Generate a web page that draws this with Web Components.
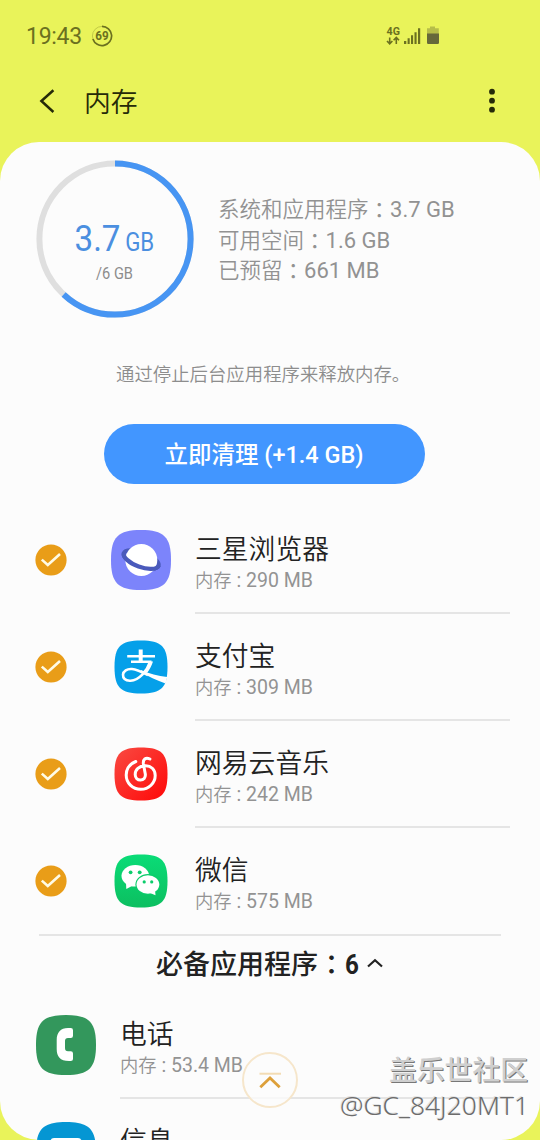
<!DOCTYPE html>
<html lang="zh-CN">
<head>
<meta charset="utf-8">
<title>内存</title>
<style>
html,body{margin:0;height:100%}
body{background:#e9f35a;font-family:Roboto,"Noto Sans CJK SC",sans-serif;color:#222;overflow:hidden}
</style>
</head>
<body>
<memory-page></memory-page>
<script>
const define = (name, html) => customElements.define(name, class extends HTMLElement {
  connectedCallback() {
    if (this.shadowRoot) return;
    const t = document.createElement('template');
    t.innerHTML = typeof html === 'function' ? html(this) : html;
    this.attachShadow({ mode: 'open' }).append(t.content.cloneNode(true));
  }
});

define('status-bar', `
<style>
:host{display:flex;height:72px;box-sizing:border-box;padding:0 100px 0 26px;justify-content:space-between;align-items:center;color:#6b7020}
.left{display:flex;align-items:center;gap:9px}
.time{font-size:23px;line-height:28px;width:56px;white-space:nowrap;letter-spacing:-.3px;padding-top:2px}
.right{display:flex;align-items:center}
svg{display:block}
</style>
<div class="left"><span class="time">19:43</span>
<svg width="22" height="22" viewBox="0 0 22 22"><circle cx="11" cy="11" r="9.6" fill="none" stroke="#c2ca45" stroke-width="1"/><path d="M11 1.4A9.6 9.6 0 1 1 1.9 14" fill="none" stroke="#6b7020" stroke-width="1.7"/><text x="11" y="15.2" font-size="12" font-weight="700" text-anchor="middle" textLength="13.4" lengthAdjust="spacingAndGlyphs" fill="#6b7020">69</text></svg></div>
<div class="right">
<svg width="54" height="22" viewBox="0 0 54 22"><text x=".6" y="10" font-size="11" font-weight="700" textLength="13.4" lengthAdjust="spacingAndGlyphs" fill="#6b7020">4G</text>
<g fill="none" stroke="#6b7020" stroke-width="1.6"><path d="M3.7 12.5V18.5M1 16l2.7 2.8L6.4 16M10.3 19v-6M7.6 15.3l2.7-2.8 2.7 2.8"/></g>
<g fill="#6b7020"><path d="M18 16h2.3v3H18zM21.6 13.3h2.1V19h-2.1zM25 10.3h2.1V19H25zM28.5 7.3h2.1V19h-2.1zM32 3.3h2.2V19H32z"/><path fill="#b6bd49" d="M44 1.5h5v1.8h3.8V9H41V3.3h3z"/><path fill="#66683a" d="M41 8.6h12V17.7q0 1.3-1.3 1.3h-9.4q-1.3 0-1.3-1.3z"/></g></svg></div>`);

define('title-bar', `
<style>
:host{display:flex;height:70px;box-sizing:border-box;padding:0 42px 12px 38px;align-items:center;color:#252a08}
.title{margin-left:28px;font-size:26.8px;line-height:36px;font-weight:350;padding-top:4px}
.more{margin-left:auto}
svg{display:block}
</style>
<svg width="18" height="26" viewBox="0 0 18 26"><path d="M15.4 2.2 3.4 13l12 11" fill="none" stroke="#252a08" stroke-width="2.5"/></svg>
<span class="title"><slot></slot></span>
<svg class="more" width="12" height="26" viewBox="0 0 12 26" fill="#252a08"><circle cx="6" cy="3.7" r="2.9"/><circle cx="6" cy="12.7" r="2.9"/><circle cx="6" cy="21.7" r="2.9"/></svg>`);

define('usage-ring', `
<style>:host{display:block;width:158px;height:158px}svg{display:block}</style>
<svg width="158" height="158" viewBox="0 0 158 158"><circle cx="79" cy="79" r="75.6" fill="none" stroke="#dfdfdf" stroke-width="6"/>
<circle cx="79" cy="79" r="75.6" fill="none" stroke="#4795f3" stroke-width="6" pathLength="100" stroke-dasharray="61.9 100" transform="rotate(-90 79 79)"/>
<text x="38.5" y="90.5" font-size="37.5" textLength="46" lengthAdjust="spacingAndGlyphs" fill="#4b8fe0">3.7</text>
<text x="89.2" y="90.5" font-size="25" textLength="29" lengthAdjust="spacingAndGlyphs" fill="#4b8fe0">GB</text>
<text x="60" y="119" font-size="16.4" textLength="37" lengthAdjust="spacingAndGlyphs" fill="#8c8c8c">/6 GB</text></svg>`);

define('usage-line', `
<style>:host{display:block;white-space:nowrap;font-size:22px;line-height:30.5px;height:30.5px;color:#929292}
.c{font-size:21.5px;font-weight:350}.k{font-size:21.5px;font-family:"Noto Sans CJK JP",sans-serif;display:inline-block;line-height:20px;transform:translateY(1px)}</style><span class="c"><slot></slot></span><span class="k" lang="ja">：</span><slot name="value"></slot>`);

define('pill-button', `
<style>:host{display:flex;width:321px;height:60px;border-radius:30px;background:#4296ff;color:#fff;align-items:center;justify-content:center;font-size:23.5px;font-weight:500}
span{line-height:32px;white-space:nowrap;padding-top:2px}</style><span><slot></slot></span>`);

define('check-mark', `
<style>:host{display:block;width:32px;height:32px}svg{display:block}</style>
<svg width="32" height="32" viewBox="0 0 32 32"><circle cx="16" cy="16" r="15.6" fill="#e99d18"/><path d="m6.8 15.6 6 5.4L25 10" fill="none" stroke="#fffbe6" stroke-width="2.6"/></svg>`);

const SQ = 'M0 30C0 7 7 0 30 0S60 7 60 30 53 60 30 60 0 53 0 30Z';
const SQ_S = 'M.5 27C.5 6.500 6.500 .5 27 .5S53.500 6.500 53.500 27 47.500 53.500 27 53.500 .5 47.500 .5 27Z';
const ICONS = {
  browser: [60, `<path d="${SQ}" fill="#7c84fb"/><g transform="rotate(20 30.2 29.5)" fill="none" stroke="#4a5abb" stroke-width="4.200"><ellipse cx="30.200" cy="29.500" rx="18.500" ry="7"/></g><circle cx="30.300" cy="30" r="16" fill="#fff"/><path d="M11.700 29C11.700 33.500 20 37 30.200 37S48.700 33.500 48.700 29" transform="rotate(20 30.2 29.5)" fill="none" stroke="#4a5abb" stroke-width="4.200"/>`],
  alipay: [54, `<path d="${SQ_S}" fill="#05a0e9"/><g fill="none" stroke="#fff" stroke-width="2.600"><path d="M13.200 16.200H41M17 21.800H37.500"/><path d="M26.700 9.500V22" stroke-width="4"/><path d="M36 21.800C33 31 25 40.300 16.500 40.700 11 41 8.800 38 9 34.700 9.300 31 13 28.600 18 29 23 29.500 28 32 34 35" /></g><path fill="#fff" d="M35.500 21.500H39C37.500 26 35.500 30 33 33L30.500 31.500C32.500 28.500 34.500 25 35.500 21.500Z"/><path fill="#fff" d="M27 30C35 33.500 44 36 53.200 37L51.500 43.500C43 40.500 34 36 26 32Z"/>`],
  netease: [54, `<defs><linearGradient id="g" x2="1" y2="1"><stop stop-color="#f94a42"/><stop offset="1" stop-color="#ff0808"/></linearGradient></defs><path d="${SQ_S}" fill="url(#g)"/><path d="M21.800 14.500C15.500 17 12.200 22 12.200 28 12.200 36 18.500 42.300 26.700 42.300S41.200 36 41.200 28.500C41.200 22.500 37 18.500 31 18.800 25 19 21.200 22.800 21.200 27.500 21.200 31 23.500 33 26.500 33S31.800 30.800 31.300 27L29.400 17C28.800 12.500 31.500 9.800 35.900 12" fill="none" stroke="#fff" stroke-width="3" stroke-linecap="round"/>`],
  wechat: [54, `<defs><linearGradient id="g" x2="0" y2="1"><stop stop-color="#0adc77"/><stop offset="1" stop-color="#0cbf60"/></linearGradient></defs><path d="${SQ_S}" fill="url(#g)"/><path fill="#fff" d="M12 28 12.300 35 19 31.500Z"/><ellipse cx="21.300" cy="21.800" rx="13.800" ry="10.800" fill="#fff"/><ellipse cx="33.900" cy="30.500" rx="12.500" ry="10.400" fill="#0bcd6b"/><ellipse cx="33.900" cy="30.500" rx="11.400" ry="9.300" fill="#fff"/><path fill="#fff" d="M36 39 41.500 41.200 41 36Z"/><g fill="#0bcd6b"><circle cx="16.600" cy="18.300" r="1.900"/><circle cx="25.700" cy="18.300" r="1.900"/><circle cx="30.200" cy="27.900" r="1.600"/><circle cx="37.700" cy="27.900" r="1.600"/></g>`],
  phone: [60, `<path d="${SQ}" fill="#33975c"/><path fill="#fff" d="M32 13H34.800Q37 13 37 15.200V20.800Q37 23 34.800 23H32Q29 23 29 26V33Q29 36.200 32 36.200H34.800Q37 36.200 37 38.400V44Q37 46 34.800 46H33C24 46 20.700 41.500 20.700 34V25C20.700 17.500 24.500 13 32 13Z"/>`],
  message: [60, `<path d="${SQ}" fill="#0596d3"/><rect x="14.500" y="16" width="31" height="26" rx="3.500" fill="#fff"/>`]
};
define('app-icon', el => {
  const [size, art] = ICONS[el.getAttribute('name')];
  return `<style>:host{display:flex;width:60px;height:60px;align-items:center;justify-content:center}</style>
<svg width="${size}" height="${size}" viewBox="0 0 ${size} ${size}">${art}</svg>`;
});

define('app-row', el => `
<style>
:host{display:flex;height:107px;box-sizing:border-box;padding:0 30px 0 35px;align-items:stretch}
check-mark{align-self:center;margin:-1px 44px 0 0}
app-icon{align-self:center;margin:-1px 24px 0 0}
:host([essential]) app-icon{margin-left:1px}
.text{flex:1;display:flex;flex-direction:column;border-bottom:2px solid #e5e5e5;white-space:nowrap;padding-top:26px}
:host([last]) .text{border-color:transparent}
.name{font-size:26.8px;line-height:34px;color:#222;font-weight:350}
.sub{font-size:19.5px;line-height:28px;color:#939393}
.sub i{font-style:normal;font-size:18.3px;font-weight:350}
</style>
${el.hasAttribute('essential') ? '' : '<check-mark></check-mark>'}<app-icon name="${el.getAttribute('icon')}"></app-icon>
<div class="text"><span class="name"><slot></slot></span>${el.hasAttribute('size') ? `<span class="sub"><i>内存</i> : ${el.getAttribute('size')}</span>` : ''}</div>`);

define('section-title', `
<style>:host{display:flex;height:58px;margin:-1px 39px 0;border-top:2px solid #e5e5e5;box-sizing:border-box;padding-bottom:3px;align-items:center;justify-content:center;font-size:27px;font-weight:500;color:#222;white-space:nowrap}
.k{font-family:"Noto Sans CJK JP",sans-serif;display:inline-block;line-height:24px;transform:translateY(1px)}b{font-weight:700;display:inline-block;width:14px;font-size:27.5px;transform:scaleX(.88);transform-origin:0 0}svg{margin:0 0 0 7px}</style>
<span><slot></slot><span class="k" lang="ja">：</span><b>6</b></span><svg width="18" height="12" viewBox="0 0 18 12"><path d="M2 9.500 9 3.300l7 6.200" fill="none" stroke="#222" stroke-width="2.200"/></svg>`);

define('top-button', `
<style>:host{position:absolute;left:242px;top:1052px;width:56px;height:56px}svg{display:block}</style>
<svg width="56" height="56" viewBox="0 0 56 56"><circle cx="28" cy="28" r="27" fill="#fcfcfc" fill-opacity=".75" stroke="#f6e6cb" stroke-width="2"/><path d="M17.500 21.700H39" stroke="#f3dcb4" stroke-width="2"/><path d="M18.300 35.200 28 26l9.700 9.200" fill="none" stroke="#dda03a" stroke-width="2.800"/></svg>`);

define('water-mark', `
<style>:host{position:absolute;right:11px;top:1049px;display:flex;flex-direction:column;align-items:flex-end;white-space:nowrap}
.a{font:500 27.800px/38px "Noto Sans CJK SC",sans-serif;color:#cfcfcf;text-shadow:1px 1px 0 #777;margin-right:1px}
.b{font:26.4px/36px "Noto Sans","Noto Sans CJK SC",sans-serif;font-weight:350;color:#6c6c6c;text-shadow:-1px -1px 0 #e4e4e4}
</style><span class="a">盖乐世社区</span><span class="b">@GC_84J20MT1</span>`);

define('memory-page', `
<style>
:host{display:block;position:relative;width:540px;height:1140px;overflow:hidden;background:#e9f35a}
main{height:998px;box-sizing:border-box;background:#fcfcfc;border-radius:39px;overflow:hidden}
.usage{display:flex;gap:24px;padding:18px 0 0 36px}
.lines{padding-top:35px}
.hint{margin:43px 0 0;padding-left:116px;font-size:18.4px;line-height:28px;color:#8d8d8d;white-space:nowrap;font-weight:350}
pill-button{margin:35px 0 23px 103.500px}
</style>
<status-bar></status-bar>
<title-bar>内存</title-bar>
<main>
<div class="usage"><usage-ring></usage-ring><div class="lines">
<usage-line>系统和应用程序<span slot="value">3.7 GB</span></usage-line>
<usage-line>可用空间<span slot="value">1.6 GB</span></usage-line>
<usage-line>已预留<span slot="value">661 MB</span></usage-line></div></div>
<p class="hint">通过停止后台应用程序来释放内存。</p>
<pill-button>立即清理 (+1.4 GB)</pill-button>
<app-row icon="browser" size="290 MB">三星浏览器</app-row>
<app-row icon="alipay" size="309 MB">支付宝</app-row>
<app-row icon="netease" size="242 MB">网易云音乐</app-row>
<app-row icon="wechat" size="575 MB" last>微信</app-row>
<section-title>必备应用程序</section-title>
<app-row icon="phone" size="53.4 MB" essential>电话</app-row>
<app-row icon="message" essential>信息</app-row>
</main>
<top-button></top-button>
<water-mark></water-mark>`);
</script>
</body>
</html>
